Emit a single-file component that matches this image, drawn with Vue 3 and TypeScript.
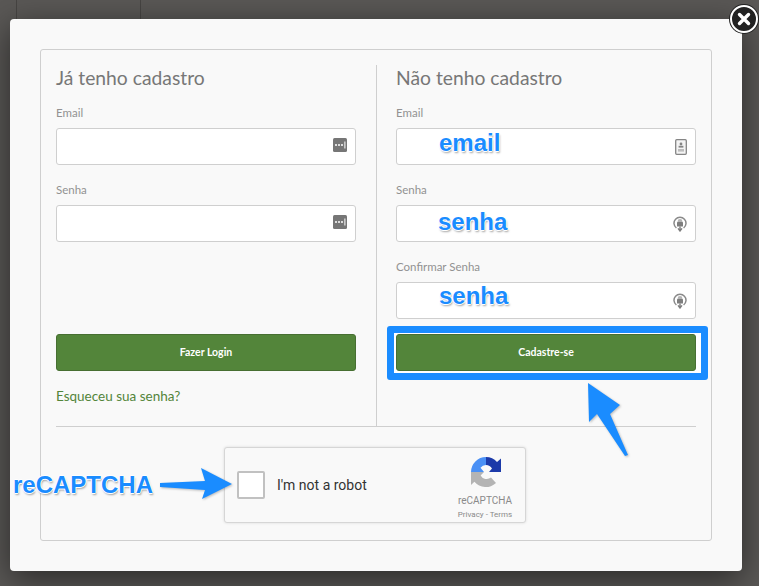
<template>
  <div class="page">
    <span class="bg-line line-a"></span>
    <span class="bg-line line-b"></span>

    <div class="modal">
      <button class="close" aria-label="Fechar">
        <svg viewBox="0 0 16 16" width="16" height="16">
          <path d="M3.5 3.5 12.5 12.5M12.5 3.5 3.5 12.5" stroke="#fff" stroke-width="3.4" stroke-linecap="round" fill="none" />
        </svg>
      </button>

      <div class="panel">
        <div class="cols">
          <section class="col col-left">
            <h2>Já tenho cadastro</h2>
            <div class="field" v-for="f in loginFields" :key="f">
              <label>{{ f }}</label>
              <div class="input">
                <svg class="icon icon-key" viewBox="0 0 14 14" width="14" height="14">
                  <rect width="14" height="14" rx="1.5" fill="#767676" />
                  <circle cx="3" cy="7" r="1" fill="#fff" />
                  <circle cx="6" cy="7" r="1" fill="#fff" />
                  <circle cx="9" cy="7" r="1" fill="#fff" />
                  <rect x="11.4" y="3.5" width="1" height="7" fill="#fff" />
                </svg>
              </div>
            </div>
            <div class="spacer"></div>
            <button class="submit">Fazer Login</button>
            <a class="forgot">Esqueceu sua senha?</a>
          </section>

          <section class="col col-right">
            <h2>Não tenho cadastro</h2>
            <div class="field">
              <label>Email</label>
              <div class="input">
                <svg class="icon" viewBox="0 0 12 16" width="12" height="16">
                  <rect x="0.7" y="0.7" width="10.6" height="14.6" rx="1" fill="#f4f4f4" stroke="#858585" stroke-width="1.3" />
                  <circle cx="6" cy="5" r="1.4" fill="#858585" />
                  <rect x="3.6" y="6.8" width="4.8" height="1.8" fill="#858585" />
                  <rect x="3" y="10" width="6" height="2.6" fill="#bdbdbd" />
                </svg>
              </div>
            </div>
            <div class="field" v-for="f in signupPasswords" :key="f">
              <label>{{ f }}</label>
              <div class="input">
                <svg class="icon" viewBox="0 0 14 17" width="14" height="17">
                  <path d="M3.4 13A6 6 0 1 1 10.6 13" fill="none" stroke="#8a8a8a" stroke-width="1.5" />
                  <path d="M4.6 6.4a2.4 2.4 0 0 1 4.8 0V7.5H4.6Z" fill="#b5b5b5" />
                  <rect x="4" y="7" width="6" height="4.6" rx="0.6" fill="#7e7e7e" />
                  <path d="M7 11.5V15M5 13.4 7 16 9 13.4" fill="none" stroke="#7e7e7e" stroke-width="1.4" />
                </svg>
              </div>
            </div>
            <button class="submit submit-marked">Cadastre-se</button>
          </section>
        </div>

        <hr />

        <div class="captcha">
          <span class="check"></span>
          <span class="robot">I'm not a robot</span>
          <div class="brand">
            <svg class="brand-logo" viewBox="0 0 30 31" width="30" height="31">
              <path d="M15 0A15 15 0 0 1 26 5L30 1.5V15H18L21 11.6A7 7 0 0 0 15 8Z" fill="#1c3aa9" />
              <path d="M15 0V8A7 7 0 0 0 9.5 10.8L13 15H0A15 15 0 0 1 15 0Z" fill="#4a90f5" />
              <path d="M0 15H13L9.6 18.4A7 7 0 0 0 20 20.6L25 26A15 15 0 0 1 3.4 24.8L0 28Z" fill="#b4b4b4" />
            </svg>
            <span class="brand-name">reCAPTCHA</span>
            <span class="brand-links">Privacy - Terms</span>
          </div>
        </div>
      </div>
    </div>

    <!-- screenshot annotations drawn on top of the form -->
    <span class="note" v-for="n in notes" :key="n.text + n.x" :style="{ left: n.x + 'px', top: n.y + 'px' }">{{ n.text }}</span>
    <span class="highlight"></span>
    <svg class="arrows" viewBox="0 0 759 586" width="759" height="586">
      <path d="M588 383 620 405 610 414 628 455 625 456 597 414 589 422Z" fill="#1a8cff" />
      <path d="M160 483 205 481 201 468 232 484 202 499 205 490 160 487Z" fill="#1a8cff" />
    </svg>
  </div>
</template>

<script setup lang="ts">
const loginFields = ['Email', 'Senha']
const signupPasswords = ['Senha', 'Confirmar Senha']

const notes = [
  { text: 'email', x: 439, y: 129 },
  { text: 'senha', x: 438, y: 208 },
  { text: 'senha', x: 439, y: 282 },
  { text: 'reCAPTCHA', x: 13, y: 471 },
]
</script>

<style>
body {
  background: #4c4a48;
}
</style>

<style scoped>
.page {
  position: relative;
  width: 759px;
  height: 586px;
  box-sizing: border-box;
  padding: 19px 17px 15px 10px;
  overflow: hidden;
  background: #5a5856;
  font-family: Lato, "Open Sans", sans-serif;
}

.bg-line {
  position: absolute;
  top: 0;
  width: 1px;
  height: 19px;
  background: #474543;
}
.line-a {
  left: 16px;
}
.line-b {
  left: 140px;
}

.modal {
  position: relative;
  box-sizing: border-box;
  height: 552px;
  padding: 30px;
  background: #f9f9f9;
  border-radius: 4px;
  box-shadow: 0 8px 34px rgba(0, 0, 0, 0.55);
}

.close {
  position: absolute;
  top: -14px;
  right: -16px;
  width: 28px;
  height: 28px;
  padding: 0;
  display: flex;
  align-items: center;
  justify-content: center;
  background: #222;
  border: 2px solid #fff;
  border-radius: 50%;
  box-shadow: 0 0 0 1px #222;
}

.panel {
  box-sizing: border-box;
  height: 492px;
  padding: 15px 15px 0;
  border: 1px solid #cfcfcf;
  border-radius: 3px;
}

.cols {
  display: grid;
  grid-template-columns: 321px 300px;
  column-gap: 19px;
  height: 361px;
}

.col {
  display: flex;
  flex-direction: column;
}
.col-left {
  box-sizing: border-box;
  padding-right: 20px;
  border-right: 1px solid #cfcfcf;
}

h2 {
  margin: 0;
  height: 28px;
  font-size: 19.3px;
  line-height: 26px;
  font-weight: 400;
  color: #777;
}

.field {
  margin-bottom: 14px;
}
h2 + .field {
  margin-top: 9px;
}

label {
  display: block;
  height: 26px;
  font-size: 11.5px;
  line-height: 22px;
  color: #929292;
}

.input {
  box-sizing: border-box;
  height: 37px;
  display: flex;
  align-items: center;
  justify-content: flex-end;
  padding-right: 8px;
  background: #fff;
  border: 1px solid #cfcfcf;
  border-radius: 3px;
}

.icon-key {
  margin-bottom: 3px;
}

.spacer {
  flex: none;
  height: 78px;
}

.submit {
  height: 37px;
  flex: none;
  padding: 0 0 2px;
  font-family: inherit;
  font-size: 10.5px;
  font-weight: 700;
  color: #fff;
  background: #53853a;
  border: 1px solid #476f32;
  border-radius: 3px;
}

.submit-marked {
  margin-top: 1px;
  box-shadow: 0 0 0 6px #fff;
}

.forgot {
  margin-top: 16px;
  font-size: 13.5px;
  line-height: 18px;
  color: #53853a;
}

hr {
  margin: 0;
  height: 1px;
  border: none;
  background: #cfcfcf;
}

.captcha {
  box-sizing: border-box;
  width: 302px;
  height: 76px;
  margin: 20px 0 0 168px;
  display: flex;
  align-items: center;
  background: #f9f9f9;
  border: 1px solid #d6d6d6;
  border-radius: 3px;
  box-shadow: 0 0 3px rgba(0, 0, 0, 0.12);
  font-family: Roboto, sans-serif;
}

.check {
  box-sizing: border-box;
  width: 28px;
  height: 28px;
  margin-left: 12px;
  background: #fff;
  border: 2px solid #c1c1c1;
  border-radius: 2px;
}

.robot {
  margin-left: 12px;
  font-size: 14px;
  color: #333;
}

.brand {
  margin: 7px 0 0 auto;
  width: 80px;
  display: flex;
  flex-direction: column;
  align-items: center;
  color: #8a8a8a;
}
.brand-logo {
  margin-left: 2px;
}
.brand-name {
  margin-top: 6px;
  font-size: 10px;
  line-height: 14px;
}
.brand-links {
  margin-top: 1px;
  font-size: 8px;
  line-height: 12px;
}

.note {
  position: absolute;
  font-family: "Liberation Sans", Arial, sans-serif;
  font-weight: 700;
  font-size: 24px;
  line-height: 28px;
  color: #1a8cff;
  text-shadow: 1px 0 0 #fff, -1px 0 0 #fff, 0 -1px 0 #fff, 0 1px 0 #fff, 1px 2px 2px rgba(0, 0, 0, 0.35);
}

.highlight {
  position: absolute;
  left: 387px;
  top: 326px;
  width: 321px;
  height: 54px;
  box-sizing: border-box;
  border: 7px solid #1a8cff;
  border-radius: 3px;
}

.arrows {
  position: absolute;
  left: 0;
  top: 0;
  filter: drop-shadow(1px 1px 1px rgba(0, 0, 0, 0.25));
}
</style>
